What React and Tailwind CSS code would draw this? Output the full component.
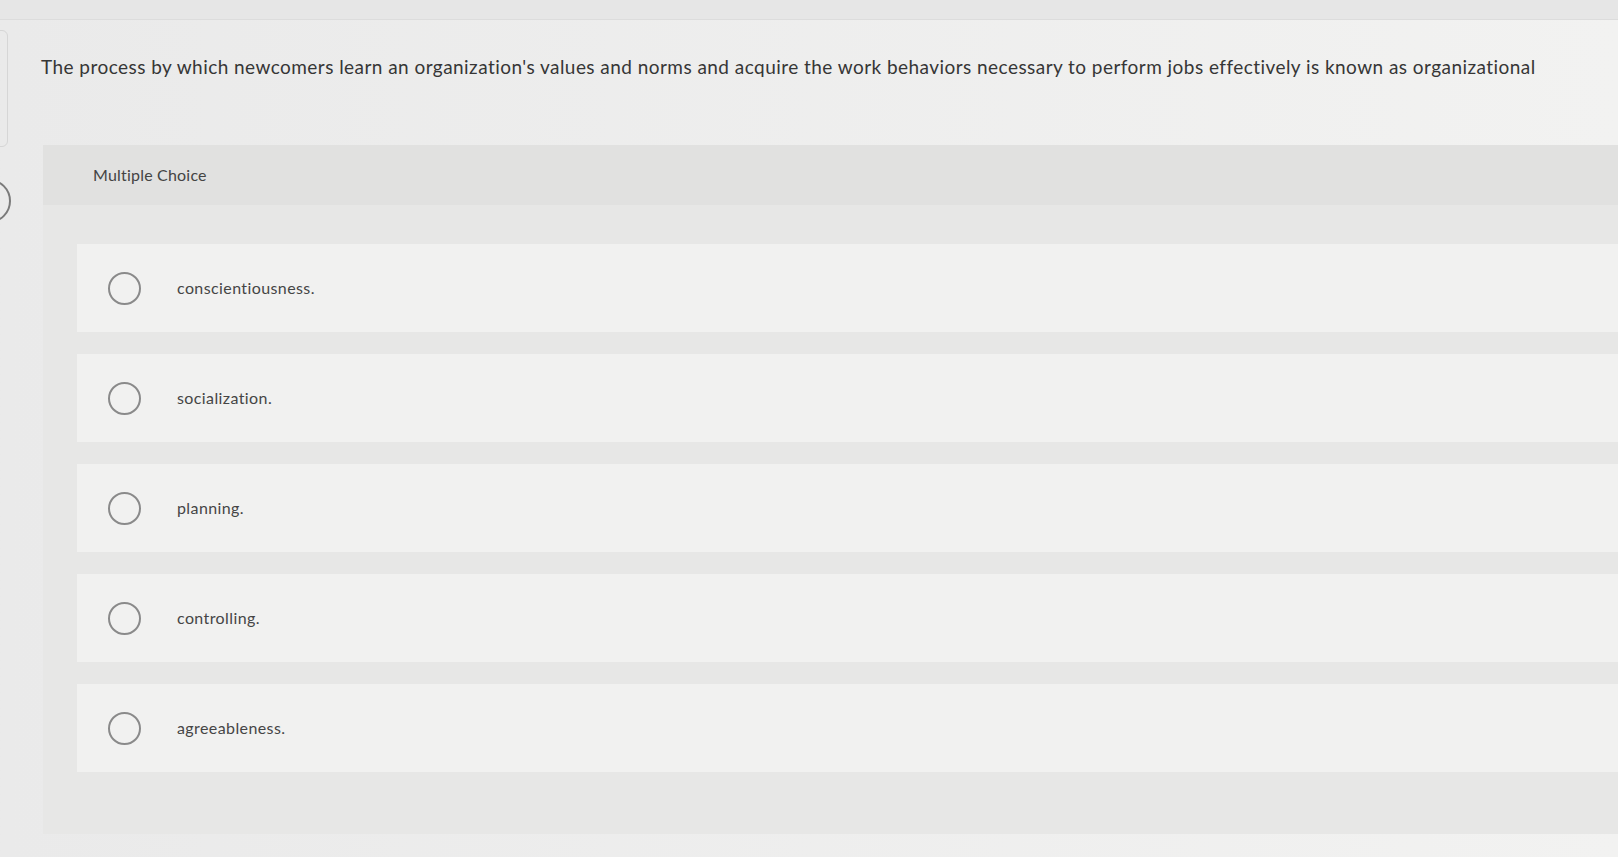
import React from 'react';

const options = [
  'conscientiousness.',
  'socialization.',
  'planning.',
  'controlling.',
  'agreeableness.',
];

const App = () => {
  return (
    <div
      className="relative w-full h-[857px] overflow-hidden bg-linear-to-r from-[#eaeaea] to-[#f2f2f1] text-[#3b3b3b]"
      style={{ fontFamily: 'Lato, "Open Sans", sans-serif' }}
    >
      {/* top strip */}
      <div className="h-[20px] bg-[#e6e6e6] border-b border-[#dcdcdc]" />

      {/* left edge fragments */}
      <div className="absolute left-[-12px] top-[30px] w-[20px] h-[117px] rounded-md border border-[#d6d6d6]" />
      <div className="absolute left-[-33px] top-[179px] w-[44px] h-[44px] rounded-full border-2 border-[#7a7a7a]" />

      {/* question */}
      <p className="pl-[41px] pt-[35px] text-[19px] leading-6 tracking-[0.45px] text-[#363636] whitespace-nowrap">
        The process by which newcomers learn an organization's values and norms and acquire the work behaviors necessary to perform jobs effectively is known as organizational
      </p>

      {/* answer panel */}
      <div className="ml-[43px] mt-[66px] h-[689px] bg-[#e7e7e6]">
        <div className="h-[60px] bg-[#e1e1e0] flex items-center pl-[50px]">
          <span className="text-[16px] tracking-[0.2px] text-[#444]">Multiple Choice</span>
        </div>

        <div className="pt-[39px] pl-[34px] flex flex-col gap-[22px]">
          {options.map((opt) => (
            <div key={opt} className="h-[88px] bg-[#f1f1f0] flex items-center pl-[31px]">
              <span className="w-[33px] h-[33px] rounded-full border-2 border-[#8a8a8a] shrink-0" />
              <span className="ml-[36px] text-[16px] tracking-[0.4px] text-[#454545]">{opt}</span>
            </div>
          ))}
        </div>
      </div>
    </div>
  );
};

export default App;
